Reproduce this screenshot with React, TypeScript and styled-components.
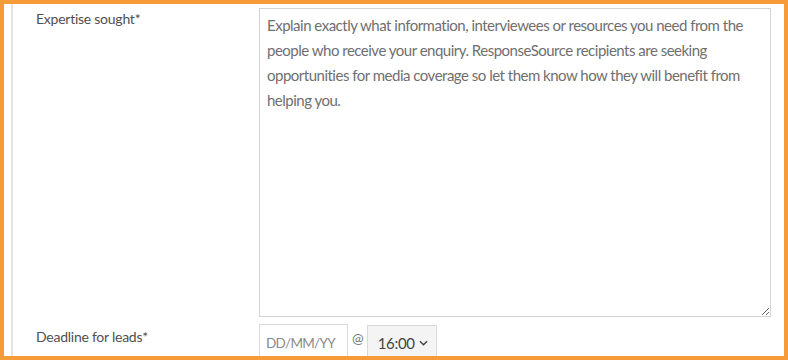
import React from "react";
import styled, { createGlobalStyle } from "styled-components";

const GlobalStyle = createGlobalStyle`
  html, body {
    margin: 0;
    padding: 0;
    background: #ffffff;
  }
  * {
    box-sizing: border-box;
  }
`;

const Frame = styled.div`
  width: 788px;
  height: 360px;
  border: 4px solid #f69b37;
  background: #ffffff;
  overflow: hidden;
  font-family: Lato, "Liberation Sans", sans-serif;
`;

const Panel = styled.div`
  margin-left: 7px;
  height: 100%;
  border-left: 2px solid #e3e3e3;
  padding: 4px 13px 0 23px;
  display: flex;
  flex-direction: column;
  gap: 7px;
`;

const Row = styled.div`
  display: grid;
  grid-template-columns: 223px 1fr;
  align-items: start;
`;

const Label = styled.label<{ $top: number }>`
  padding-top: ${(p) => p.$top}px;
  font-size: 14px;
  letter-spacing: -0.25px;
  color: #505050;
  line-height: 18px;
`;

const TextArea = styled.textarea`
  width: 100%;
  height: 309px;
  border: 1px solid #d3d3d3;
  padding: 4px 7px;
  font-family: Lato, "Liberation Sans", sans-serif;
  font-size: 15px;
  letter-spacing: -0.5px;
  line-height: 25px;
  color: #666;
  resize: vertical;
  outline: none;
  &::placeholder {
    color: #6f6f6f;
  }
`;

const DeadlineFields = styled.div`
  display: flex;
  align-items: flex-start;
  gap: 3px;
`;

const DateInput = styled.input`
  width: 89px;
  height: 38px;
  border: 1px solid #d9d9d9;
  padding: 0 6px;
  font-family: Lato, "Liberation Sans", sans-serif;
  font-size: 13.5px;
  letter-spacing: -0.7px;
  color: #555;
  outline: none;
  &::placeholder {
    color: #8a8a8a;
  }
`;

const At = styled.span`
  font-size: 14px;
  color: #777;
  padding: 5px 0 0 1px;
`;

const SelectBox = styled.div`
  width: 70px;
  height: 36px;
  margin-top: 1px;
  border: 1px solid #d9d9d9;
  background: #f4f4f4;
  display: flex;
  align-items: center;
  justify-content: space-between;
  padding: 0 8px 0 10px;
  font-size: 15px;
  letter-spacing: -0.3px;
  color: #444;
`;

const Chevron = () => (
  <svg width="9" height="6" viewBox="0 0 10 6" fill="none">
    <path d="M1 1l4 4 4-4" stroke="#444" strokeWidth="1.6" />
  </svg>
);

export default function App() {
  return (
    <>
      <GlobalStyle />
      <Frame>
        <Panel>
          <Row>
            <Label $top={2}>Expertise sought*</Label>
            <TextArea placeholder="Explain exactly what information, interviewees or resources you need from the people who receive your enquiry. ResponseSource recipients are seeking opportunities for media coverage so let them know how they will benefit from helping you." />
          </Row>
          <Row>
            <Label $top={4}>Deadline for leads*</Label>
            <DeadlineFields>
              <DateInput placeholder="DD/MM/YY" />
              <At>@</At>
              <SelectBox>
                16:00
                <Chevron />
              </SelectBox>
            </DeadlineFields>
          </Row>
        </Panel>
      </Frame>
    </>
  );
}
